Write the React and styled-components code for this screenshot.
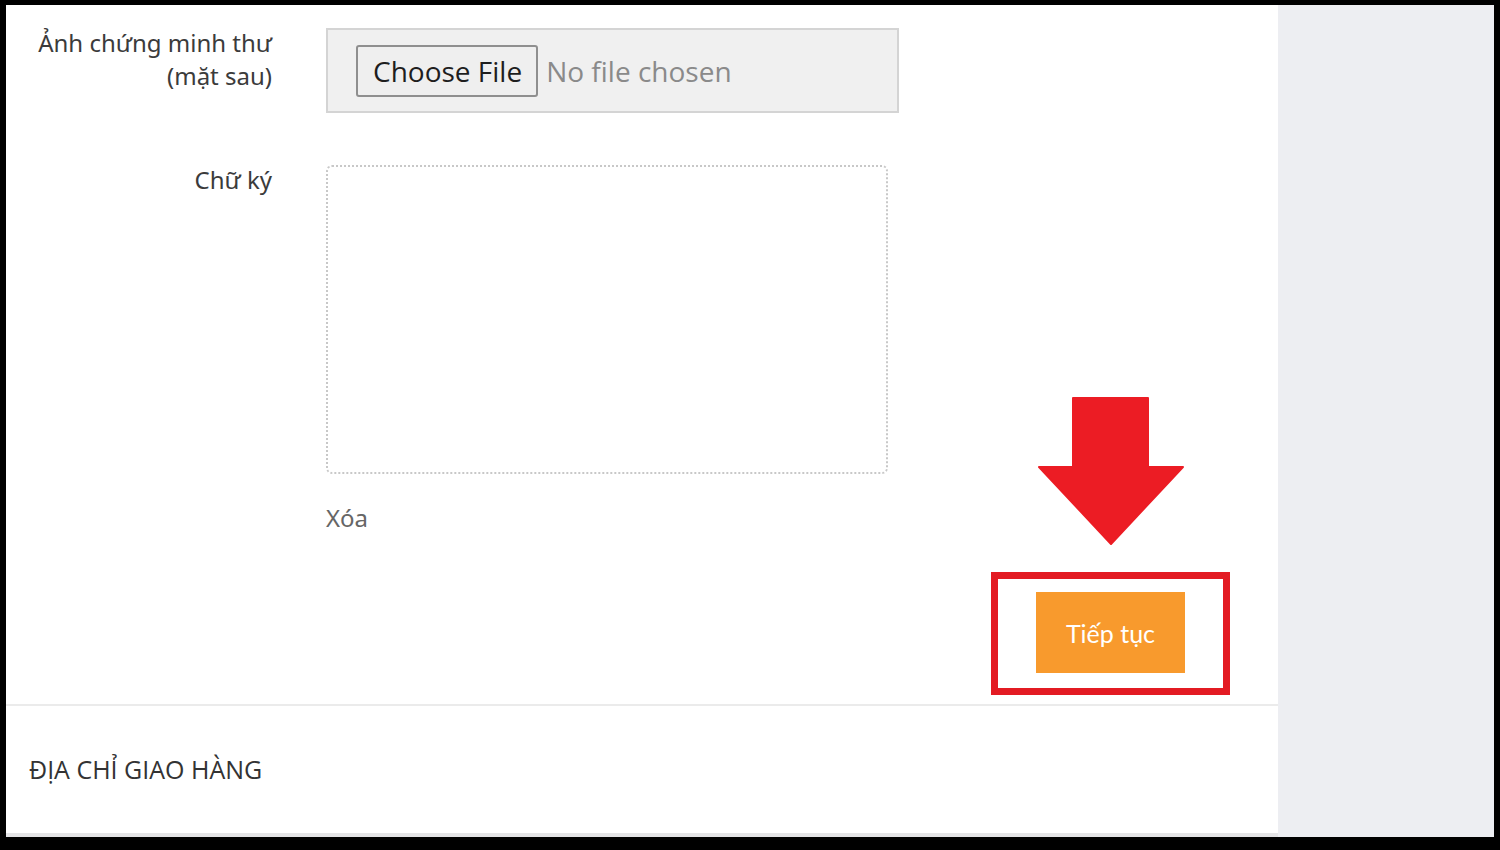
import React from "react";
import styled, { createGlobalStyle } from "styled-components";

const Global = createGlobalStyle`
  html, body { margin: 0; padding: 0; background: #000; }
  body { width: 1500px; height: 850px; overflow: hidden; }
`;

const Frame = styled.div`
  box-sizing: border-box;
  width: 1500px;
  height: 850px;
  background: #000;
  padding: 5px 6px 13px 6px;
  display: flex;
`;

const Main = styled.main`
  width: 1272px;
  background: #fff;
  display: flex;
  flex-direction: column;
  border-bottom: 4px solid #e4e4e6;
  box-sizing: border-box;
`;

const Side = styled.aside`
  flex: 1;
  background: #edeef2;
`;

const Form = styled.section`
  padding-top: 23px;
  display: flex;
  flex-direction: column;
`;

const Row = styled.div`
  display: grid;
  grid-template-columns: 266px 1fr;
  column-gap: 54px;
  margin-top: ${(p) => p.$gap || 0}px;
`;

const Label = styled.div`
  font-family: "Noto Sans", "Lato", sans-serif;
  font-size: 24px;
  line-height: 33px;
  color: #3b3b3b;
  text-align: right;
  margin-top: -2px;
`;

const Field = styled.div`
  display: flex;
  flex-direction: column;
  align-items: flex-start;
`;

const FileBox = styled.div`
  box-sizing: border-box;
  width: 573px;
  height: 85px;
  background: #f0f0f0;
  border: 2px solid #d4d4d4;
  display: flex;
  align-items: center;
  padding-left: 28px;
  gap: 8px;
  font-family: "Open Sans", "Noto Sans", sans-serif;
`;

const FileButton = styled.button`
  box-sizing: border-box;
  height: 52px;
  padding: 0 14px 0 15px;
  background: #efefef;
  border: 2px solid #8f8f8f;
  border-radius: 3px;
  font-family: "Open Sans", "Noto Sans", sans-serif;
  font-size: 28px;
  color: #1e1e1e;
  cursor: pointer;
`;

const FileStatus = styled.span`
  font-size: 28px;
  color: #8a8a8a;
`;

const SignaturePad = styled.div`
  box-sizing: border-box;
  width: 562px;
  height: 309px;
  border: 2px dotted #c8c8c8;
  border-radius: 6px;
  background: #fff;
`;

const ClearLink = styled.a`
  margin-top: 27px;
  font-family: "Noto Sans", "Lato", sans-serif;
  font-size: 24px;
  line-height: 33px;
  color: #666;
  cursor: pointer;
`;

const Actions = styled.div`
  display: flex;
  justify-content: flex-end;
  padding-right: 48px;
  margin-top: 38px;
`;

const Highlight = styled.div`
  position: relative;
  box-sizing: border-box;
  width: 239px;
  height: 123px;
  border: 7px solid #e31b23;
  display: flex;
  justify-content: center;
  padding-top: 13px;
`;

const Arrow = styled.svg`
  position: absolute;
  left: 50%;
  bottom: calc(100% + 34px);
  transform: translateX(-50%);
`;

const NextButton = styled.button`
  width: 149px;
  height: 81px;
  background: #f89a2d;
  border: none;
  color: #fff;
  font-family: "Lato", "Noto Sans", sans-serif;
  font-size: 25px;
  cursor: pointer;
`;

const Divider = styled.hr`
  margin: 9px 0 0 0;
  border: none;
  border-top: 2px solid #ebebeb;
  width: 100%;
`;

const Address = styled.section`
  flex: 1;
  display: flex;
  align-items: center;
  padding-left: 23px;
  padding-bottom: 2px;
`;

const SectionTitle = styled.h2`
  margin: 0;
  font-family: "Open Sans", "Noto Sans", sans-serif;
  font-weight: 400;
  font-size: 25px;
  color: #333;
`;

export default function App() {
  return (
    <>
      <Global />
      <Frame>
        <Main>
          <Form>
            <Row>
              <Label>
                Ảnh chứng minh thư
                <br />
                (mặt sau)
              </Label>
              <Field>
                <FileBox>
                  <FileButton type="button">Choose File</FileButton>
                  <FileStatus>No file chosen</FileStatus>
                </FileBox>
              </Field>
            </Row>
            <Row $gap={52}>
              <Label>Chữ ký</Label>
              <Field>
                <SignaturePad />
                <ClearLink>Xóa</ClearLink>
              </Field>
            </Row>
            <Actions>
              <Highlight>
                <Arrow width="146" height="150" viewBox="-1 -1 146 150">
                  <path
                    d="M34 2 H109 V71 H144 L72 148 L0 71 H34 Z"
                    fill="#ec1c24"
                    stroke="#ec1c24"
                    strokeWidth="2"
                    strokeLinejoin="round"
                  />
                </Arrow>
                <NextButton type="button">Tiếp tục</NextButton>
              </Highlight>
            </Actions>
          </Form>
          <Divider />
          <Address>
            <SectionTitle>ĐỊA CHỈ GIAO HÀNG</SectionTitle>
          </Address>
        </Main>
        <Side />
      </Frame>
    </>
  );
}
